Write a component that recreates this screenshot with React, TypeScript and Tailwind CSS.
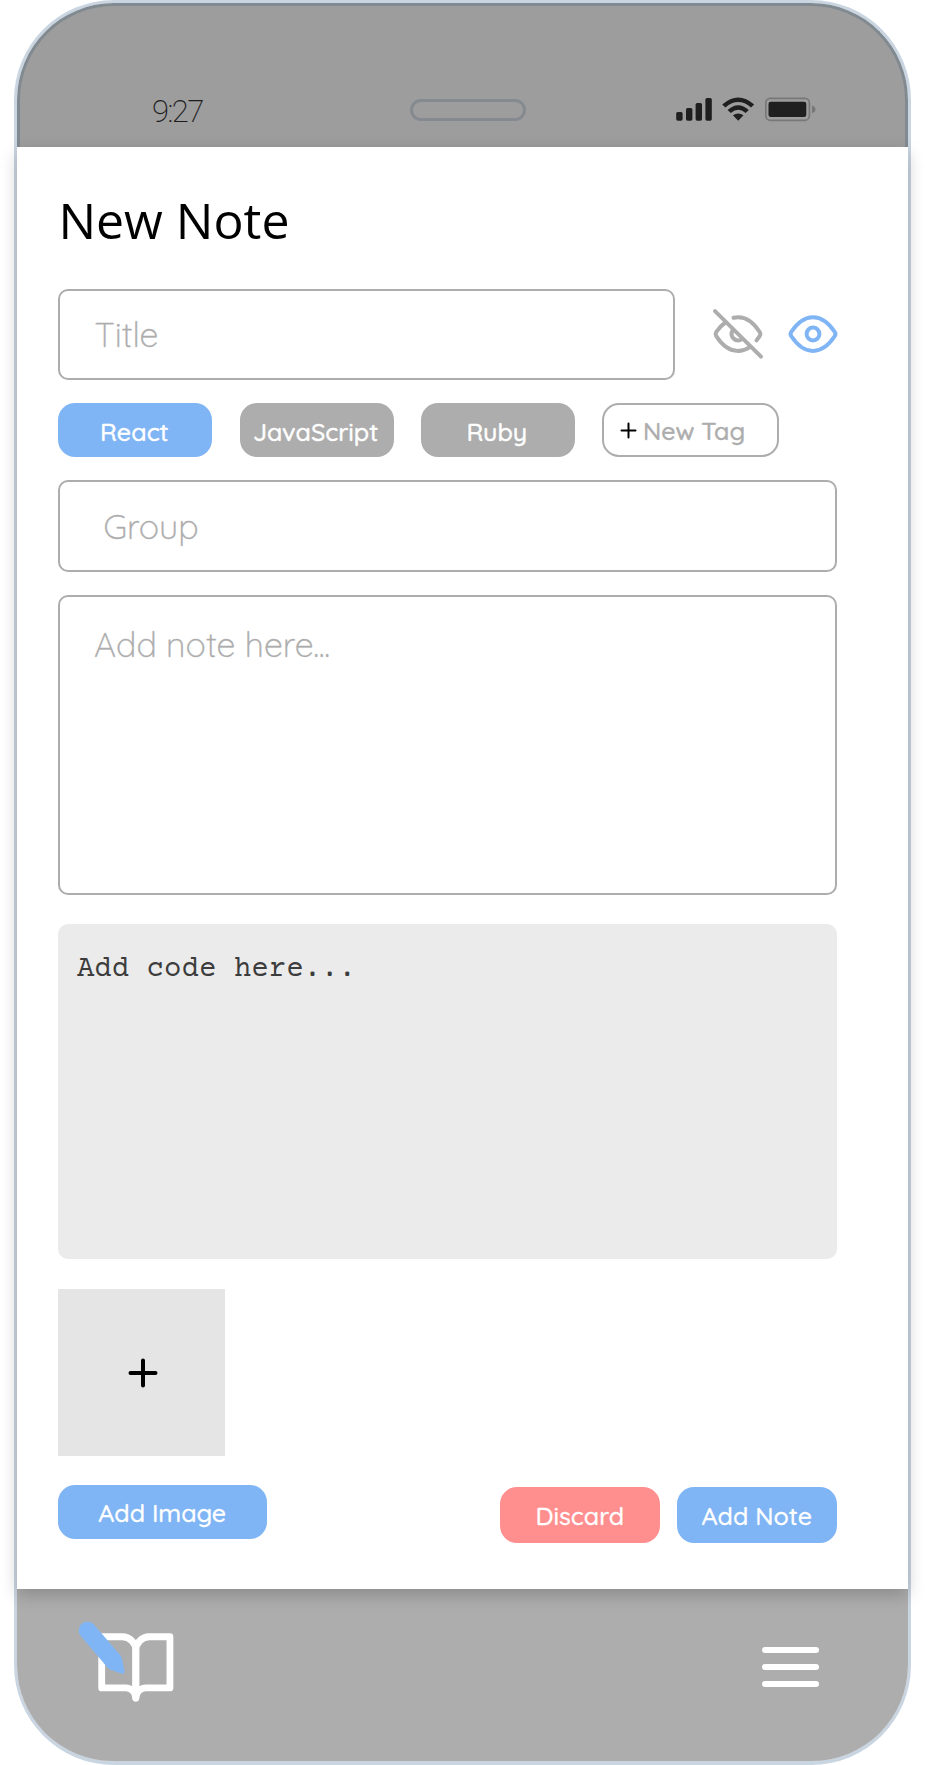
import React from "react";

type TagProps = { label: string; active?: boolean };

function StatusBar() {
  return (
    <header className="flex h-[144px] shrink-0 items-start rounded-t-[97px] border-x-[3px] border-t-[3px] border-[#828a91] bg-[#9d9d9d] pt-[88px]">
      <span className="ml-[132px] mt-[-1.5px] w-[258px] font-['Roboto',sans-serif] text-[31px] leading-[37px] font-[200] tracking-[-1.6px] text-[#1c1c1c]">
        9:27
      </span>
      <div className="mt-[5px] h-[22px] w-[116px] rounded-full border-[3px] border-[#858a91]" />
      <svg className="ml-[150px]" width="144" height="32" viewBox="676 94 144 32">
        <g fill="#1f1f1f">
          <rect x="676.2" y="112" width="6.4" height="8.7" rx="1.6" />
          <rect x="686" y="108" width="6.4" height="12.7" rx="1.6" />
          <rect x="695.6" y="103" width="6.4" height="17.7" rx="1.6" />
          <rect x="705.4" y="98" width="6.4" height="22.7" rx="1.6" />
          <path d="M722.2 104.5Q738.2 90.5 754.2 104.5L751 107.4Q738.2 96.5 725.4 107.4Z" />
          <path d="M727.6 110Q738.2 100.5 748.8 110L745.6 112.9Q738.2 106.5 730.8 112.9Z" />
          <path d="M732.9 115.3Q738.2 111.5 743.5 115.3L738.2 120.7Z" />
          <rect x="768.5" y="101.8" width="37.8" height="15.2" rx="2.2" />
        </g>
        <rect x="765.8" y="98.3" width="43.6" height="22" rx="4.5" fill="none" stroke="#787878" strokeWidth="1.7" />
        <path d="M812 105.5Q815.5 107 815.5 109.4T812 113.3Z" fill="#787878" />
      </svg>
    </header>
  );
}

function HiddenIcon() {
  return (
    <svg width="52" height="52" viewBox="711.5 308.3 52 52" fill="none" stroke="#adadad" strokeWidth="4" strokeLinecap="round" strokeLinejoin="round">
      <path d="M714.5 311.5L760.5 357" />
      <path d="M724.3 323.3Q719.5 326.5 715.7 332.3Q714.5 334.3 715.7 336.3Q725 351.2 737.5 351.2Q743.8 351.2 749.5 347.4" />
      <path d="M733 318Q748 314.6 759.2 332.3Q760.5 334.3 759.2 336.3L756 340.7" />
      <path d="M731.8 331.3A6.5 6.5 0 0 0 740.5 340" />
    </svg>
  );
}

function VisibleIcon() {
  return (
    <svg width="52" height="52" viewBox="786.5 308.3 52 52" fill="none" stroke="#80b5f5" strokeWidth="4" strokeLinecap="round" strokeLinejoin="round">
      <path d="M790.7 332.3Q800.5 317.5 812.5 317.5T834.3 332.3Q835.6 334.3 834.3 336.3Q824.5 351.2 812.5 351.2T790.7 336.3Q789.4 334.3 790.7 332.3Z" />
      <circle cx="812.5" cy="334.3" r="6.4" />
    </svg>
  );
}

function Tag({ label, active }: TagProps) {
  return (
    <button
      className={`flex h-[54px] w-[154px] items-center justify-center rounded-[17px] pt-[2px] pr-[2px] text-[25px] leading-[31px] font-medium [-webkit-text-stroke:0.4px] text-white ${
        active ? "bg-[#80b5f5]" : "bg-[#adadad]"
      }`}
    >
      {label}
    </button>
  );
}

function Footer() {
  return (
    <footer className="flex h-[172px] shrink-0 items-start justify-between rounded-b-[96px] bg-[#adadad] pt-[26px] pr-[89px] pl-[58px]">
      <svg width="105" height="96" viewBox="75 1615 105 96">
        <g transform="translate(94.9 1626.5) scale(3.41)" fill="none" stroke="#fff" strokeWidth="2" strokeLinecap="round" strokeLinejoin="round">
          <path d="M2 3h6a4 4 0 0 1 4 4v14a3 3 0 0 0-3-3H2z" />
          <path d="M22 3h-6a4 4 0 0 0-4 4v14a3 3 0 0 1 3-3h7z" />
        </g>
        <path
          d="M80.3 1635.5A8.8 8.8 0 0 1 93.5 1624L120.5 1655.5Q122 1657.3 122.3 1660L124.6 1671.5Q124.7 1674 122 1673.7L111 1670Q108.5 1669 107 1667Z"
          fill="#80b5f5"
        />
      </svg>
      <div className="mt-[32px] flex w-[57px] flex-col gap-[11px]">
        <span className="h-[6px] rounded-full bg-white" />
        <span className="h-[6px] rounded-full bg-white" />
        <span className="h-[6px] rounded-full bg-white" />
      </div>
    </footer>
  );
}

export default function App() {
  return (
    <div className="flex h-[1765px] w-[925px] overflow-hidden bg-white pl-[14px] font-['Quicksand','Nunito',sans-serif]">
      <main className="flex h-[1765px] w-[897px] flex-col rounded-[100px] border-[3px] border-b-[4px] border-[#cad5e2]">
        <StatusBar />
        <section className="relative flex h-[1442px] shrink-0 flex-col bg-white pt-[48px] pr-[71px] pl-[41.4px] shadow-[0_6px_16px_rgba(0,0,0,0.2)]">
          <h1 className="h-[93.5px] font-['Open_Sans','Noto_Sans',sans-serif] text-[50px] leading-[50px] text-black">New Note</h1>

          <div className="flex items-center">
            <div className="flex h-[91.5px] w-[616.6px] shrink-0 items-center rounded-[10px] border-2 border-[#adadad] pt-[1.5px] pl-[34px] text-[34px] leading-[42px] font-light tracking-[0.05px] [-webkit-text-stroke:0.4px] text-[#adadad]">
              Title
            </div>
            <div className="ml-[36.6px] flex shrink-0 gap-[23px]">
              <HiddenIcon />
              <VisibleIcon />
            </div>
          </div>

          <div className="mt-[23px] flex gap-[27.2px]">
            <Tag label="React" active />
            <Tag label="JavaScript" />
            <Tag label="Ruby" />
            <button className="flex h-[54px] w-[177px] items-center rounded-[17px] border-2 border-[#adadad] pl-[16px] text-[25px] leading-[31px] font-medium [-webkit-text-stroke:0.4px] text-[#adadad]">
              <svg className="mr-[6px]" width="17" height="17" viewBox="0 0 17 17" stroke="#000" strokeWidth="2" strokeLinecap="round">
                <path d="M8.5 1.5v14M1.5 8.5h14" />
              </svg>
              <span>New Tag</span>
            </button>
          </div>

          <div className="mt-[23px] flex h-[92px] shrink-0 items-center rounded-[10px] border-2 border-[#adadad] pt-[1.5px] pl-[43px] text-[34px] leading-[42px] font-light [-webkit-text-stroke:0.4px] text-[#adadad]">
            Group
          </div>
          <div className="mt-[23px] h-[300px] shrink-0 rounded-[10px] border-2 border-[#adadad] pt-[27px] pl-[33.5px] text-[34px] leading-[42px] font-light tracking-[0.05px] [-webkit-text-stroke:0.4px] text-[#adadad]">
            Add note here...
          </div>
          <div className="mt-[29px] h-[335px] shrink-0 rounded-[10px] bg-[#ebebeb] pt-[29px] pl-[18.5px] font-['Courier_Prime','Courier_10_Pitch','FreeMono','Nimbus_Mono_PS',monospace] text-[29.1px] leading-[34px] text-[#3c3c3c]">
            Add code here...
          </div>

          <button className="mt-[30px] flex h-[166.5px] w-[166.6px] shrink-0 items-center justify-center bg-[#e5e5e5]">
            <svg className="mt-[1px] ml-[2px]" width="32" height="32" viewBox="0 0 32 32" stroke="#000" strokeWidth="4" strokeLinecap="round">
              <path d="M16 3.5v25M3.5 16h25" />
            </svg>
          </button>

          <div className="mt-[29.5px] flex items-start text-[25px] leading-[31px] font-medium [-webkit-text-stroke:0.3px] text-white">
            <button className="flex h-[54px] w-[208.6px] items-center justify-center rounded-[17px] bg-[#80b5f5] pt-[1px] pr-[1px]">Add Image</button>
            <button className="mt-[2px] ml-auto flex h-[56px] w-[160.5px] items-center justify-center rounded-[17px] bg-[#ff8f8f] pt-[1px]">Discard</button>
            <button className="mt-[2px] ml-[16.5px] flex h-[56px] w-[160.5px] items-center justify-center rounded-[17px] bg-[#80b5f5] pt-[1px]">Add Note</button>
          </div>
        </section>
        <Footer />
      </main>
    </div>
  );
}
